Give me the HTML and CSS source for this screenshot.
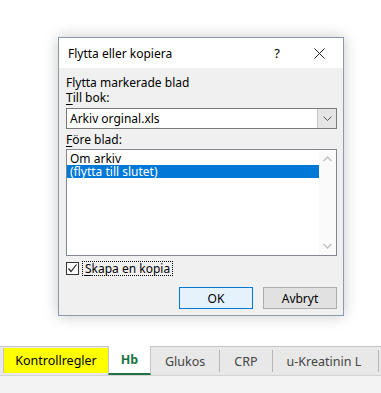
FILE: index.html
```html
<!DOCTYPE html>
<html lang="sv">
<head>
  <meta charset="UTF-8" />
  <title>Flytta eller kopiera</title>
  <link rel="stylesheet" href="styles.css">
</head>
<body>
  <div class="sheet">
    <div class="dialog">
      <div class="titlebar">
        <span class="title">Flytta eller kopiera</span>
        <span class="help">?</span>
        <span class="close">
          <svg width="11" height="11" viewBox="0 0 11 11"><path d="M0.5 0.5L10.5 10.5M10.5 0.5L0.5 10.5" stroke="#222" stroke-width="1"/></svg>
        </span>
      </div>
      <div class="body">
        <div class="label">Flytta markerade blad</div>
        <div class="label"><u>T</u>ill bok:</div>
        <div class="combo">
          <span class="combo-text">Arkiv orginal.xls</span>
          <span class="combo-btn">
            <svg width="9" height="6" viewBox="0 0 9 6"><path d="M0.5 0.5L4.5 4.5L8.5 0.5" fill="none" stroke="#555" stroke-width="1"/></svg>
          </span>
        </div>
        <div class="label gap"><u>F</u>öre blad:</div>
        <div class="listbox">
          <div class="items">
            <div class="item">Om arkiv</div>
            <div class="item selected">(flytta till slutet)</div>
          </div>
          <div class="scrollbar">
            <svg width="9" height="6" viewBox="0 0 9 6"><path d="M0.5 5L4.5 1L8.5 5" fill="none" stroke="#c2c2c2" stroke-width="1.5"/></svg>
            <svg width="9" height="6" viewBox="0 0 9 6"><path d="M0.5 1L4.5 5L8.5 1" fill="none" stroke="#c2c2c2" stroke-width="1.5"/></svg>
          </div>
        </div>
        <div class="check-row">
          <span class="checkbox">
            <svg width="11" height="11" viewBox="0 0 11 11"><path d="M1.5 5.5L4 8.5L9.5 1.5" fill="none" stroke="#222" stroke-width="1.2"/></svg>
          </span>
          <span class="check-label"><u>S</u>kapa en kopia</span>
        </div>
        <div class="buttons">
          <button class="btn default">OK</button>
          <button class="btn">Avbryt</button>
        </div>
      </div>
    </div>
  </div>

  <div class="tabs">
    <div class="tab yellow">Kontrollregler</div>
    <div class="tab active">Hb</div>
    <div class="tab">Glukos</div>
    <div class="tab">CRP</div>
    <div class="tab last">u-Kreatinin L</div>
  </div>
  <div class="status"></div>
</body>
</html>
```

FILE: styles.css
```css
body {
  margin: 0;
  width: 381px;
  height: 393px;
  overflow: hidden;
  background: #ffffff;
  font-family: 'Noto Sans', 'Liberation Sans', sans-serif;
  font-size: 12px;
  color: #000;
}

.sheet {
  height: 346px;
  padding: 37px 0 0 58px;
  box-sizing: border-box;
}

.dialog {
  width: 286px;
  height: 279px;
  box-sizing: border-box;
  border: 1px solid #8d99aa;
  background: #f0f0f0;
  box-shadow: 0 0 14px rgba(0, 0, 0, 0.22);
  display: flex;
  flex-direction: column;
}

.titlebar {
  height: 30px;
  background: #fff;
  display: flex;
  align-items: center;
  padding-left: 9px;
}
.title { flex: 1; font-size: 12px; }
.help { width: 20px; text-align: center; margin-right: 22px; font-size: 13px; }
.close { width: 20px; margin-right: 14px; display: flex; justify-content: center; }

.body {
  padding: 8px 6px 0 7px;
  display: flex;
  flex-direction: column;
}

.label { height: 14px; line-height: 14px; }
.label + .label { margin-top: 1px; }
.label.gap { margin-top: 4px; }
u { text-decoration-thickness: 1px; text-underline-offset: 2px; }

.combo {
  margin-top: 3px;
  height: 21px;
  box-sizing: border-box;
  border: 1px solid #7a7a7a;
  background: #fff;
  display: flex;
  align-items: center;
}
.combo-text { flex: 1; padding-left: 3px; }
.combo-btn {
  width: 18px;
  height: 19px;
  background: #e5e5e5;
  border-left: 1px solid #c9c9c9;
  display: flex;
  align-items: center;
  justify-content: center;
}

.listbox {
  margin-top: 2px;
  height: 107px;
  box-sizing: border-box;
  border: 1px solid #828790;
  background: #fff;
  display: flex;
}
.items { flex: 1; padding-top: 2px; }
.item { height: 13px; line-height: 13px; padding-left: 3px; }
.item.selected { background: #0078d7; color: #fff; }
.scrollbar {
  width: 17px;
  background: #fafafa;
  display: flex;
  flex-direction: column;
  justify-content: space-between;
  align-items: center;
  padding: 6px 0 6px;
}

.check-row {
  margin-top: 6px;
  display: flex;
  align-items: center;
  height: 13px;
}
.checkbox {
  width: 13px;
  height: 13px;
  box-sizing: border-box;
  border: 1px solid #333;
  background: #fff;
  display: flex;
  align-items: center;
  justify-content: center;
}
.check-label {
  margin-left: 4px;
  padding: 0 2px;
  outline: 1px dotted #000;
  line-height: 13px;
}

.buttons {
  margin-top: 12px;
  display: flex;
  justify-content: flex-end;
  gap: 10px;
}
.btn {
  width: 74px;
  height: 22px;
  font-family: inherit;
  font-size: 12px;
  background: #e1e1e1;
  border: 1px solid #adadad;
  padding: 0;
  color: #000;
}
.btn.default {
  background: #e5f1fb;
  border: 1px solid #0078d7;
}

.tabs {
  height: 29px;
  display: flex;
  padding-left: 3px;
  box-sizing: border-box;
  border-top: 1px solid #c6c6c6;
  background: #e8e8e8;
}
.tab {
  padding: 0 14px;
  display: flex;
  align-items: center;
  color: #444;
  font-size: 12.5px;
  border-right: 1px solid #b5b5b5;
  margin: 3px 0 3px;
}
.tab.yellow {
  background: #ffff00;
  color: #000;
  width: 105px;
  box-sizing: border-box;
  justify-content: center;
  margin: 1px 0 2px;
  border-left: 1px solid #c6c6c6;
  border-right: none;
}
.tab.active {
  background: #fff;
  color: #217346;
  font-weight: bold;
  margin: -1px 0 0;
  border-left: 1px solid #c6c6c6;
  border-right: 1px solid #c6c6c6;
  width: 43px;
  box-sizing: border-box;
  justify-content: center;
  border-bottom: 2px solid #217346;
}
.tab.last { padding: 0 17px 0 14px; }

.status {
  height: 18px;
  background: #f3f3f3;
  border-top: 1px solid #d4d4d4;
}
```
